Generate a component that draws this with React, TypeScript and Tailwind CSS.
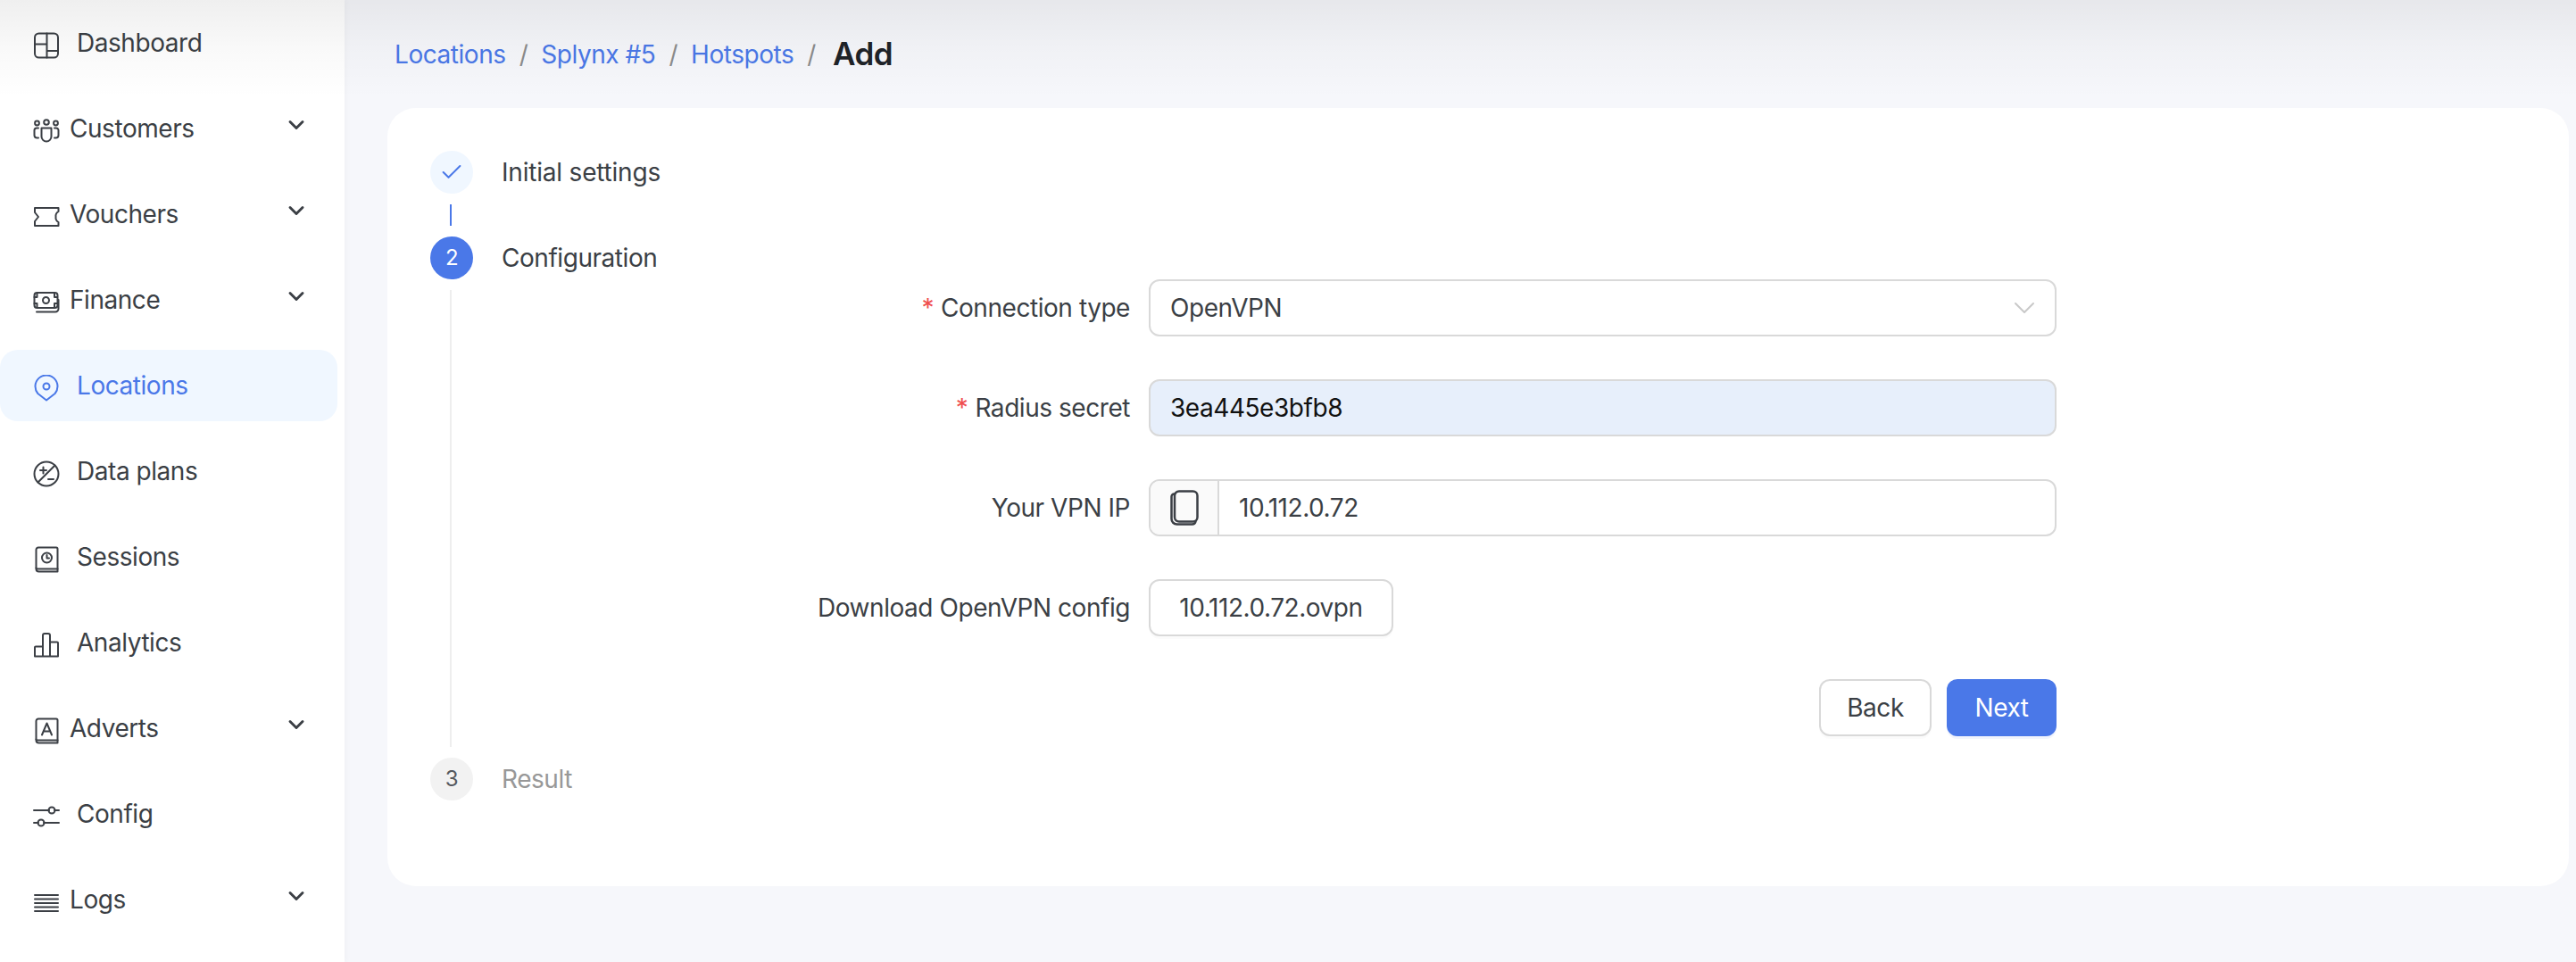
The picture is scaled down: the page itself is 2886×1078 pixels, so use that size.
import type { ReactNode } from "react";
import { Check, ChevronDown } from "lucide-react";

const font = "font-['Inter',sans-serif] tracking-[-0.45px]";

function Icon({ children }: { children: ReactNode }) {
  return (
    <svg width="30" height="30" viewBox="0 0 30 30" fill="none" stroke="currentColor" strokeWidth="2" strokeLinecap="round" strokeLinejoin="round" className="shrink-0 mt-[6px]">
      {children}
    </svg>
  );
}

const icons: Record<string, ReactNode> = {
  Dashboard: (
    <>
      <rect x="2" y="1.500" width="26" height="27" rx="4.500" />
      <path d="M15.500 1.500v27M2 13.500h13.500M15.500 21H28" />
    </>
  ),
  Customers: (
    <>
      <circle cx="4.500" cy="6" r="2.400" />
      <circle cx="15" cy="5" r="2.800" />
      <circle cx="25.500" cy="6" r="2.400" />
      <path d="M9.500 11.500h11V21a5.500 5.500 0 0 1-11 0z" />
      <path d="M6 11.500H4A2.500 2.500 0 0 0 1.500 14v5.500a3 3 0 0 0 3 3H6M24 11.500h2a2.500 2.500 0 0 1 2.500 2.500v5.500a3 3 0 0 1-3 3H24" />
    </>
  ),
  Vouchers: <path d="M2 5h26.500v4a6 6 0 0 0-3 6 6 6 0 0 0 3 6v4H2v-5l4-5-4-5z" />,
  Finance: (
    <>
      <rect x="1.500" y="4" width="26" height="17" rx="3" />
      <circle cx="14.500" cy="12.500" r="3.500" />
      <path d="M1.500 9h3V5M27 9h-3V5M1.500 16h3v4M27 16h-3v4" />
      <path d="M4 25.500h21a3.500 3.500 0 0 0 3.500-3.500V12" />
    </>
  ),
  Locations: (
    <>
      <path d="M15 28.500 5.400 21A12.500 12.500 0 1 1 24.600 21z" />
      <circle cx="15" cy="13" r="3.500" />
    </>
  ),
  "Data plans": (
    <>
      <circle cx="15" cy="15" r="13.500" />
      <path d="M24.500 5.500 5.500 24.500M8 11h7M11.500 7.500v7M17 21h6" />
    </>
  ),
  Sessions: (
    <>
      <path d="M6.500 28.500h21V3a1.500 1.500 0 0 0-1.500-1.500H6A2.500 2.500 0 0 0 3.500 4v21.500a3 3 0 0 0 3 3z" />
      <path d="M3.500 24.500a1.500 1.500 0 0 0 1.500 1h22.500" />
      <circle cx="15.500" cy="13" r="5.500" />
      <path d="M15.500 10v3.500H18" />
    </>
  ),
  Analytics: (
    <path d="M2 27.500V17.500a1 1 0 0 1 1-1h8M2 27.500h26V12.500a1 1 0 0 0-1-1h-8M11 27.500V4a2 2 0 0 1 2-2h4a2 2 0 0 1 2 2v23.500" />
  ),
  Adverts: (
    <>
      <path d="M6.500 28.500h21V3a1.500 1.500 0 0 0-1.500-1.500H6A2.500 2.500 0 0 0 3.500 4v21.500a3 3 0 0 0 3 3z" />
      <path d="M3.500 24.500a1.500 1.500 0 0 0 1.500 1h22.500" />
      <path d="m10 19.500 5.500-13 5.500 13M11.800 15.500h7.400" />
    </>
  ),
  Config: (
    <>
      <path d="M1 8h17M24 8h5M1 22h5M12 22h17" />
      <circle cx="21" cy="8" r="3.500" />
      <circle cx="9" cy="22" r="3.500" />
    </>
  ),
  Logs: <path d="M2 7h26M2 11.500h26M2 16h26M2 20.500h26M2 25h26" />,
};

const nav = [
  { name: "Dashboard" },
  { name: "Customers", sub: true },
  { name: "Vouchers", sub: true },
  { name: "Finance", sub: true },
  { name: "Locations", active: true },
  { name: "Data plans" },
  { name: "Sessions" },
  { name: "Analytics" },
  { name: "Adverts", sub: true },
  { name: "Config" },
  { name: "Logs", sub: true },
];

function Sidebar() {
  return (
    <aside className="relative w-[386px] shrink-0 h-full bg-white flex flex-col gap-4 pt-2 pr-2 overflow-hidden shadow-[2px_0_6px_rgba(0,0,0,0.03)]">
      {nav.map((item) => (
        <div
          key={item.name}
          className={`h-20 shrink-0 flex items-center pl-[37px] rounded-[20px] ${item.active ? "bg-[#f0f7ff] text-[#4a78e8]" : "text-[#3b3f45]"}`}
        >
          <Icon>{icons[item.name]}</Icon>
          <span className={`text-[28px] leading-[40px] ${item.sub ? "ml-[11px]" : "ml-[19px]"}`}>{item.name}</span>
          {item.sub && <ChevronDown size={28} strokeWidth={2.5} className="ml-auto mr-[32px] -mt-2 text-[#3b3f45]" />}
        </div>
      ))}
    </aside>
  );
}

function Breadcrumbs() {
  const links = ["Locations", "Splynx #5", "Hotspots"];
  return (
    <div className="h-[121px] pl-2 flex items-center text-[28px]">
      {links.map((l) => (
        <span key={l} className="flex items-center">
          <span className="text-[#4a78e8]">{l}</span>
          <span className="mx-[15px] text-[#8c8c8c]">/</span>
        </span>
      ))}
      <span className="ml-1 text-[35px] font-semibold text-[#1f2328]">Add</span>
    </div>
  );
}

function Field({ label, required, children }: { label: string; required?: boolean; children: ReactNode }) {
  return (
    <div className="flex items-center">
      <div className="w-[725px] text-right text-[28px] text-[#3b3f45] pr-[21px]">
        {required && <span className="text-[#ef4f4f] mr-2">*</span>}
        {label}
      </div>
      {children}
    </div>
  );
}

function CopyIcon() {
  return (
    <svg width="32" height="40" viewBox="0 0 32 40" fill="none" stroke="#3b3f45" strokeWidth="2.500" strokeLinecap="round" className="shrink-0">
      <rect x="5" y="1.500" width="25.500" height="34" rx="5" />
      <path d="M5 4.500h-.5A3 3 0 0 0 1.500 7.500v25a6 6 0 0 0 6 6h17a4 4 0 0 0 4-3" />
    </svg>
  );
}

const inputBox = "h-16 w-[1017px] rounded-xl border-2 border-[#d9d9d9] text-[28px] flex items-center";

function Form() {
  return (
    <div className="flex flex-col gap-12 pb-3">
      <Field label="Connection type" required>
        <div className={`${inputBox} px-[22px] justify-between text-[#3b3f45]`}>
          OpenVPN
          <ChevronDown size={40} strokeWidth={1.2} className="text-[#c9c9c9] -mr-2" />
        </div>
      </Field>
      <Field label="Radius secret" required>
        <div className={`${inputBox} px-[22px] bg-[#e7effb] text-[#111111]`}>3ea445e3bfb8</div>
      </Field>
      <Field label="Your VPN IP">
        <div className={inputBox}>
          <div className="h-full w-[77px] shrink-0 bg-[#fafafa] rounded-l-[10px] border-r-2 border-[#d9d9d9] flex items-center justify-center">
            <CopyIcon />
          </div>
          <span className="pl-[22px] text-[#3b3f45]">10.112.0.72</span>
        </div>
      </Field>
      <Field label="Download OpenVPN config">
        <div className="h-16 w-[274px] rounded-xl border-2 border-[#d9d9d9] text-[28px] text-[#3b3f45] flex items-center justify-center shadow-[0_3px_0_rgba(0,0,0,0.015)]">
          10.112.0.72.ovpn
        </div>
      </Field>
      <div className="flex justify-end gap-[17px] text-[28px]">
        <div className="h-16 w-[126px] rounded-xl border-2 border-[#d9d9d9] text-[#3b3f45] flex items-center justify-center shadow-[0_3px_0_rgba(0,0,0,0.015)]">
          Back
        </div>
        <div className="h-16 w-[123px] rounded-xl bg-[#4a78e8] text-white flex items-center justify-center shadow-[0_3px_0_rgba(74,120,232,0.08)]">
          Next
        </div>
      </div>
    </div>
  );
}

function Steps() {
  return (
    <div className="flex flex-col">
      {/* step 1 */}
      <div className="flex items-center gap-8">
        <div className="w-12 h-12 rounded-full bg-[#f0f7ff] text-[#4a78e8] flex items-center justify-center">
          <Check size={28} strokeWidth={1.75} />
        </div>
        <span className="text-[28px] tracking-[-0.2px] text-[#3b3f45]">Initial settings</span>
      </div>
      <div className="ml-[22px] my-3 w-0.5 h-6 bg-[#4a78e8]" />

      {/* step 2 */}
      <div className="flex gap-8">
        <div className="w-12 flex flex-col shrink-0">
          <div className="w-12 h-12 rounded-full bg-[#4a78e8] text-white text-2xl flex items-center justify-center">2</div>
          <div className="ml-[22px] mt-3 w-0.5 flex-1 bg-[#eeeeee]" />
        </div>
        <div>
          <div className="h-12 flex items-center text-[28px] text-[#3b3f45]">Configuration</div>
          <Form />
        </div>
      </div>

      {/* step 3 */}
      <div className="flex items-center gap-8 mt-3">
        <div className="w-12 h-12 rounded-full bg-[#f2f2f2] text-[#55595e] text-2xl flex items-center justify-center">3</div>
        <span className="text-[28px] text-[#989898]">Result</span>
      </div>
    </div>
  );
}

export default function App() {
  return (
    <div className={`relative h-[1078px] w-full flex overflow-hidden bg-[#f6f7fb] ${font}`}>
      <Sidebar />
      <main className="flex-1 pl-12 pr-2">
        <Breadcrumbs />
        <div className="h-[872px] rounded-[32px] bg-white pt-12 pl-12">
          <Steps />
        </div>
      </main>
      {/* soft shade along the top edge */}
      <div className="absolute inset-x-0 top-0 h-[110px] pointer-events-none bg-gradient-to-b from-[#00000010] via-[#00000006] to-transparent" />
    </div>
  );
}
